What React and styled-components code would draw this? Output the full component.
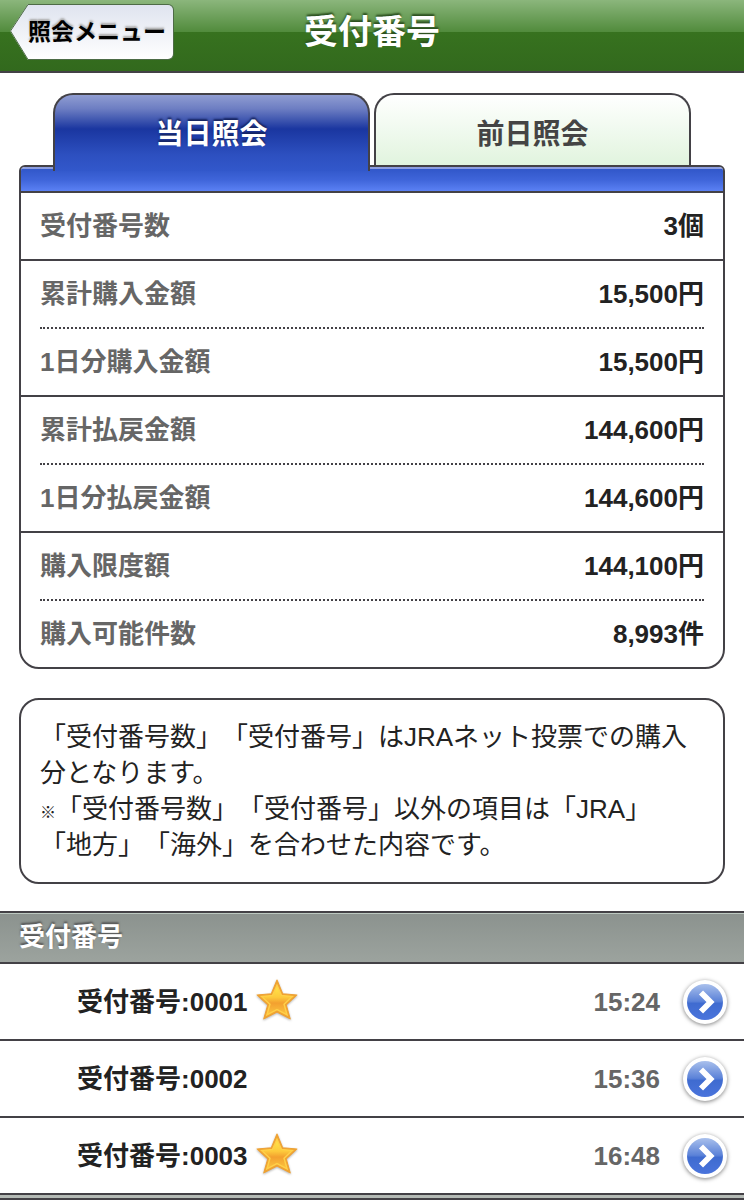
import React, { useState } from "react";
import styled, { createGlobalStyle, css } from "styled-components";

const LINE = "#434146";

const TABS = ["当日照会", "前日照会"];

const SUMMARY = [
  [{ label: "受付番号数", value: "3個" }],
  [
    { label: "累計購入金額", value: "15,500円" },
    { label: "1日分購入金額", value: "15,500円" }
  ],
  [
    { label: "累計払戻金額", value: "144,600円" },
    { label: "1日分払戻金額", value: "144,600円" }
  ],
  [
    { label: "購入限度額", value: "144,100円" },
    { label: "購入可能件数", value: "8,993件" }
  ]
];

const RECEIPTS = [
  { number: "0001", time: "15:24", hit: true },
  { number: "0002", time: "15:36", hit: false },
  { number: "0003", time: "16:48", hit: true }
];

const StarIcon = () => (
  <Star viewBox="0 0 40 40" role="img" aria-label="的中">
    <defs>
      <linearGradient id="starFill" x1="0" y1="0" x2="0" y2="1">
        <stop offset="0" stopColor="#ffe84a" />
        <stop offset="0.4" stopColor="#fdca3c" />
        <stop offset="0.6" stopColor="#f3a02f" />
        <stop offset="1" stopColor="#fbc540" />
      </linearGradient>
    </defs>
    <path
      d="M20 1 L25.4 14 L39 15.2 L28.8 24.6 L32.6 38 L20 31.4 L7.4 38 L11.2 24.6 L1 15.2 L14.6 14 Z"
      fill="#efa233"
      stroke="#efa233"
      strokeLinejoin="round"
    />
    <path
      d="M20 6 L24.2 15.6 L34.6 16.7 L26.7 24 L29.6 34.2 L20 29.1 L10.4 34.2 L13.3 24 L5.4 16.7 L15.8 15.6 Z"
      fill="url(#starFill)"
      stroke="#ffd048"
      strokeWidth="1.4"
    />
  </Star>
);

const ArrowIcon = () => (
  <Arrow viewBox="0 0 48 48" aria-hidden="true">
    <defs>
      <linearGradient id="arrowFill" x1="0" y1="0" x2="0" y2="1">
        <stop offset="0" stopColor="#a9c0ec" />
        <stop offset="0.48" stopColor="#5b82d8" />
        <stop offset="0.54" stopColor="#3f6bd0" />
        <stop offset="1" stopColor="#4a74dc" />
      </linearGradient>
    </defs>
    <circle cx="24" cy="24" r="22" fill="#fff" />
    <circle cx="24" cy="24" r="18" fill="url(#arrowFill)" />
    <path
      d="M20 14.5 L29.5 24 L20 33.5"
      fill="none"
      stroke="#fff"
      strokeWidth="5.8"
    />
  </Arrow>
);

const App = () => {
  const [activeTab, setActiveTab] = useState(0);

  return (
    <>
      <GlobalStyle />
      <Header>
        <BackButton type="button">
          <BackTip viewBox="0 0 18 56" aria-hidden="true">
            <defs>
              <linearGradient id="tipFill" x1="0" y1="0" x2="0" y2="1">
                <stop offset="0" stopColor="#dfe4ef" />
                <stop offset="1" stopColor="#ffffff" />
              </linearGradient>
            </defs>
            <path d="M18 0 L0 27 L18 56 Z" fill="url(#tipFill)" />
            <path
              d="M18 0.5 L0.5 27 L18 55.5"
              fill="none"
              stroke="#4d6b46"
            />
          </BackTip>
          <BackLabel>照会メニュー</BackLabel>
        </BackButton>
        <Title>受付番号</Title>
      </Header>

      <Main>
        <Tabs role="tablist">
          {TABS.map((text, index) => (
            <Tab
              key={text}
              type="button"
              role="tab"
              aria-selected={activeTab === index}
              $active={activeTab === index}
              onClick={() => setActiveTab(index)}
            >
              {text}
            </Tab>
          ))}
        </Tabs>
        <Panel>
          <Strip />
          {SUMMARY.map(group => (
            <Group key={group[0].label}>
              {group.map(({ label, value }) => (
                <SummaryRow key={label}>
                  <Label>{label}</Label>
                  <Value>{value}</Value>
                </SummaryRow>
              ))}
            </Group>
          ))}
        </Panel>

        <Note>
          <p>「受付番号数」「受付番号」はJRAネット投票での購入分となります。</p>
          <p>
            <Mark>※</Mark>
            「受付番号数」「受付番号」以外の項目は「JRA」「地方」「海外」を合わせた内容です。
          </p>
        </Note>
      </Main>

      <SectionTitle>受付番号</SectionTitle>
      <ReceiptList>
        {RECEIPTS.map(({ number, time, hit }) => (
          <li key={number}>
            <Receipt href={`#${number}`}>
              <span>受付番号:{number}</span>
              {hit && <StarIcon />}
              <Time>{time}</Time>
              <ArrowIcon />
            </Receipt>
          </li>
        ))}
      </ReceiptList>
      <BottomBar />
    </>
  );
};

export default App;

const GlobalStyle = createGlobalStyle`
  * {
    box-sizing: border-box;
  }
  body {
    margin: 0;
    background: #fff;
    color: #222;
    font-family: "Liberation Sans", "Noto Sans CJK JP", sans-serif;
    font-size: 26px;
    line-height: 36px;
    text-spacing-trim: space-all;
  }
  button {
    font-family: inherit;
    cursor: pointer;
  }
  p, dl, dd, ul, h1, h2 {
    margin: 0;
    padding: 0;
  }
`;

const Header = styled.header`
  display: grid;
  grid-template-columns: 1fr auto 1fr;
  align-items: center;
  padding: 4px 10px 11px;
  border-bottom: 2px solid ${LINE};
  background: linear-gradient(
    #8bb67c 0,
    #518b3c 32px,
    #37721f 32px,
    #32691d 100%
  );
`;

const BackButton = styled.button`
  display: flex;
  justify-self: start;
  height: 56px;
  padding: 0;
  border: 0;
  background: none;
  color: #000;
  white-space: nowrap;
`;

const BackTip = styled.svg`
  display: block;
  width: 18px;
  height: 56px;
`;

const BackLabel = styled.span`
  padding: 0 7px 0 0;
  border: 1px solid #4d6b46;
  border-left: 0;
  border-radius: 0 6px 6px 0;
  background: linear-gradient(#dfe4ef, #fff);
  font-size: 23px;
  font-weight: bold;
  line-height: 54px;
  text-shadow: 0 -2px 2px #aaa;
`;

const Title = styled.h1`
  color: #fff;
  font-size: 34px;
  line-height: 56px;
  text-shadow: 0 -2px 2px #2b4f1e;
`;

const Main = styled.main`
  padding: 20px 19px 27px;
`;

const Tabs = styled.div`
  display: flex;
  gap: 4px;
  padding: 0 34px;
`;

const Tab = styled.button`
  flex: 1;
  height: 72px;
  padding: 4px 0 0;
  border: 2px solid ${LINE};
  border-bottom: 0;
  border-radius: 20px 20px 0 0;
  background: linear-gradient(#fff, #e1f4de);
  color: #444;
  font-size: 28px;
  font-weight: bold;

  ${({ $active }) =>
    $active &&
    css`
      z-index: 1;
      height: 78px;
      margin-bottom: -6px;
      padding: 4px 0 6px;
      background: linear-gradient(
        #909dd2 0,
        #6c7dc2 14px,
        #1a36a0 34px,
        #2d50c0 60px,
        #3258cb 100%
      );
      color: #fff;
      text-shadow: 0 -2px 2px #16245f;
    `}
`;

const Panel = styled.section`
  overflow: hidden;
  border: 2px solid ${LINE};
  border-radius: 6px 6px 20px 20px;
`;

const Strip = styled.div`
  height: 24px;
  border-top: 2px solid #8c9ddf;
  background: linear-gradient(#3157c9, #3f65da 50%, #5b81f4);
`;

const Group = styled.dl`
  border-top: 2px solid ${LINE};
`;

const SummaryRow = styled.div`
  display: flex;
  justify-content: space-between;
  margin: 0 19px;
  padding: 15px 0;
  font-weight: bold;

  & + & {
    border-top: 2px dotted ${LINE};
  }
`;

const Label = styled.dt`
  color: #666;
`;

const Value = styled.dd`
  color: #222;
`;

const Note = styled.div`
  margin-top: 29px;
  padding: 19px 22px 19px 19px;
  border: 2px solid ${LINE};
  border-radius: 20px;
`;

const Mark = styled.span`
  font-size: 16px;
  font-weight: bold;
  line-height: 16px;
`;

const SectionTitle = styled.h2`
  padding: 6px 19px 7px;
  border: 2px solid ${LINE};
  border-width: 2px 0;
  background: linear-gradient(#8b928e, #9ca39e);
  box-shadow: inset 0 1px #bcc8c0;
  color: #fff;
  font-size: 26px;
  text-shadow: 0 -2px 2px #555;
`;

const ReceiptList = styled.ul`
  list-style: none;
`;

const Receipt = styled.a`
  display: flex;
  align-items: center;
  height: 77px;
  padding: 0 15px 0 77px;
  border-bottom: 2px solid ${LINE};
  color: #222;
  font-weight: bold;
  text-decoration: none;
`;

const Star = styled.svg`
  width: 42px;
  height: 42px;
  margin: 0 0 4px 8px;
  filter: drop-shadow(0 1px 1px rgba(0, 0, 0, 0.3));
`;

const Time = styled.time`
  margin-left: auto;
  color: #666;
`;

const Arrow = styled.svg`
  width: 48px;
  height: 48px;
  margin-left: 21px;
  filter: drop-shadow(0 1px 2px rgba(0, 0, 0, 0.5));
`;

const BottomBar = styled.div`
  height: 5px;
  border-bottom: 2px solid ${LINE};
  background: #b4bab5;
`;
